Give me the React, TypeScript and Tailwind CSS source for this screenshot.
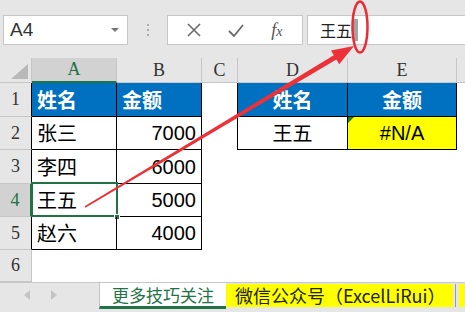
import React from 'react';

const CJK = "font-['Noto_Sans_CJK_SC',sans-serif]";
const SERIF = "font-['Liberation_Serif',serif]";
const SANS = "font-['Liberation_Sans','Noto_Sans_CJK_SC',sans-serif]";

const HeaderCell: React.FC<{ label: string; active?: boolean; className?: string }> = ({ label, active, className = '' }) => (
  <div
    className={`flex items-center justify-center text-[18px] ${SERIF} border-r border-r-[#c6c6c6] ${
      active ? 'bg-[#d2d2d2] text-[#217346] border-b-2 border-b-[#217346]' : 'bg-[#e6e6e6] text-[#333] border-b border-b-[#c6c6c6]'
    } ${className}`}
  >
    {label}
  </div>
);

const RowHead: React.FC<{ n: number; active?: boolean; edge?: string }> = ({ n, active, edge = 'border-r-[#c6c6c6]' }) => (
  <div
    className={`flex items-center justify-center text-[18px] ${SERIF} border-b border-b-[#c6c6c6] ${
      active ? 'bg-[#d2d2d2] text-[#217346] border-r-2 border-r-[#217346]' : `bg-[#e6e6e6] text-[#333] border-r ${edge}`
    }`}
  >
    {n}
  </div>
);

const people = [
  ['张三', '7000'],
  ['李四', '6000'],
  ['王五', '5000'],
  ['赵六', '4000'],
];

export default function App() {
  return (
    <div className="relative w-[465px] h-[312px] overflow-hidden bg-white select-none">
      {/* formula bar */}
      <div className="h-[58px] bg-[#e6e6e6] flex items-start pt-[15px] pl-[3px]">
        <div className="w-[125px] h-[30px] bg-white border border-[#c6c6c6] flex items-center justify-between pl-[6px] pr-[8px]">
          <span className={`text-[19px] text-[#333] ${SANS}`}>A4</span>
          <svg width="8" height="5" viewBox="0 0 8 5">
            <path d="M0 0 L8 0 L4 4 Z" fill="#777" />
          </svg>
        </div>
        <div className="w-[39px] h-[30px] flex flex-col items-center justify-center gap-[3px]">
          <span className="w-[2px] h-[2px] bg-[#aaa]" />
          <span className="w-[2px] h-[2px] bg-[#aaa]" />
          <span className="w-[2px] h-[2px] bg-[#aaa]" />
        </div>
        <div className="w-[136px] h-[30px] bg-white border border-[#c6c6c6] flex items-center justify-around px-[6px]">
          <svg width="14" height="14" viewBox="0 0 14 14">
            <path d="M1 1 L13 13 M13 1 L1 13" stroke="#6a6a6a" strokeWidth="1.6" />
          </svg>
          <svg width="16" height="13" viewBox="0 0 16 13">
            <path d="M1 7 L6 12 L15 1" stroke="#6a6a6a" strokeWidth="1.8" fill="none" />
          </svg>
          <span className={`italic text-[18px] text-[#555] ${SERIF}`}>
            f<span className="text-[14px]">x</span>
          </span>
        </div>
        <div className="ml-[4px] flex-1 h-[30px] bg-white border border-r-0 border-[#c6c6c6] flex items-center pl-[12px]">
          <span className={`text-[16px] text-[#222] ${CJK}`}>王五</span>
          <span className="ml-[1px] w-[5px] h-[22px] bg-[#a3a3a3]" />
        </div>
      </div>

      {/* sheet grid */}
      <div className="grid grid-cols-[32px_85px_85px_36px_110px_109px_8px] grid-rows-[25px_34px_33px_34px_33px_33px_32px]">
        <div className="relative bg-[#e6e6e6] border-r border-b border-[#c6c6c6]">
          <svg className="absolute right-[3px] bottom-[3px]" width="17" height="15" viewBox="0 0 17 15">
            <path d="M17 0 L17 15 L0 15 Z" fill="#b9b9b9" />
          </svg>
        </div>
        <HeaderCell label="A" active />
        <HeaderCell label="B" />
        <HeaderCell label="C" />
        <HeaderCell label="D" />
        <HeaderCell label="E" />
        <HeaderCell label="" className="border-r-0" />

        {/* row 1 */}
        <RowHead n={1} edge="border-r-black" />
        <div className={`bg-[#0070c0] border-r border-b border-black flex items-center pl-[5px] text-white font-bold text-[20px] ${CJK}`}>姓名</div>
        <div className={`bg-[#0070c0] border-r border-b border-black flex items-center pl-[5px] text-white font-bold text-[20px] ${CJK}`}>金额</div>
        <div className="border-r border-black" />
        <div className={`bg-[#0070c0] border-r border-b border-black flex items-center justify-center text-white font-bold text-[20px] ${CJK}`}>姓名</div>
        <div className={`bg-[#0070c0] border-r border-b border-black flex items-center justify-center text-white font-bold text-[20px] ${CJK}`}>金额</div>
        <div />

        {people.map(([name, amount], i) => {
          const row = i + 2;
          const sel = row === 4;
          return (
            <React.Fragment key={name}>
              <RowHead n={row} active={sel} edge="border-r-black" />
              <div className={`relative border-r border-b border-black flex items-center pl-[5px] text-[20px] text-black ${CJK}`}>
                {name}
                {sel && (
                  <>
                    <div className="absolute -left-px -top-[2px] -right-[2px] -bottom-[1px] border-2 border-[#217346]" />
                    <div className="absolute -right-[4px] -bottom-[4px] w-[6px] h-[6px] bg-[#217346] border border-white" />
                  </>
                )}
              </div>
              <div className={`border-r border-b border-black flex items-center justify-end pr-[5px] text-[20px] text-black ${SANS}`}>{amount}</div>
              <div className={row === 2 ? 'border-r border-black' : ''} />
              {row === 2 ? (
                <>
                  <div className={`border-r border-b border-black flex items-center justify-center text-[20px] text-black ${CJK}`}>王五</div>
                  <div className={`relative bg-[#ffff00] border-r border-b border-black flex items-center justify-center text-[20px] text-black ${SANS}`}>
                    <svg className="absolute left-0 top-0" width="6" height="6" viewBox="0 0 6 6">
                      <path d="M0 0 L6 0 L0 6 Z" fill="#1e7b1e" />
                    </svg>
                    #N/A
                  </div>
                </>
              ) : (
                <>
                  <div />
                  <div />
                </>
              )}
              <div />
            </React.Fragment>
          );
        })}

        {/* row 6 */}
        <RowHead n={6} />
        <div />
        <div />
        <div />
        <div />
        <div />
        <div />
      </div>

      {/* sheet tabs */}
      <div className="h-[30px] bg-[#e6e6e6] border-t border-[#c6c6c6] flex items-start">
        <div className="w-[99px] h-[24px] flex items-center pl-[24px] gap-[21px]">
          <svg width="6" height="10" viewBox="0 0 6 10">
            <path d="M6 0 L6 10 L0 5 Z" fill="#c4c4c4" />
          </svg>
          <svg width="6" height="10" viewBox="0 0 6 10">
            <path d="M0 0 L0 10 L6 5 Z" fill="#c4c4c4" />
          </svg>
        </div>
        <div className={`w-[127px] h-[26px] bg-white border-l border-[#c6c6c6] border-b-[3px] border-b-[#217346] flex items-center justify-center text-[17px] text-[#217346] ${CJK}`}>
          更多技巧关注
        </div>
        <div className={`w-[227px] h-[23px] mt-[1px] bg-[#ffff00] flex items-center pl-[9px] text-[18px] text-[#222] ${CJK}`}>
          微信公众号（ExcelLiRui）
        </div>
        <div className="w-px h-[23px] mt-[1px] ml-[2px] bg-[#9a9a9a]" />
        <div className="flex-1 h-[23px] mt-[1px] ml-[3px] bg-[#ffff00]" />
      </div>

      {/* annotation overlay */}
      <svg className="absolute left-0 top-0 pointer-events-none" width="465" height="312" viewBox="0 0 465 312">
        <ellipse cx="360" cy="27" rx="7.5" ry="25.5" fill="none" stroke="#ec2c33" strokeWidth="2.5" />
        <polygon
          points="85.4,207.7 336.4,59.4 339.2,64.2 354,46 331,50.4 333.8,55.2 84.6,206.3"
          fill="#ec3238"
        />
      </svg>
    </div>
  );
}
